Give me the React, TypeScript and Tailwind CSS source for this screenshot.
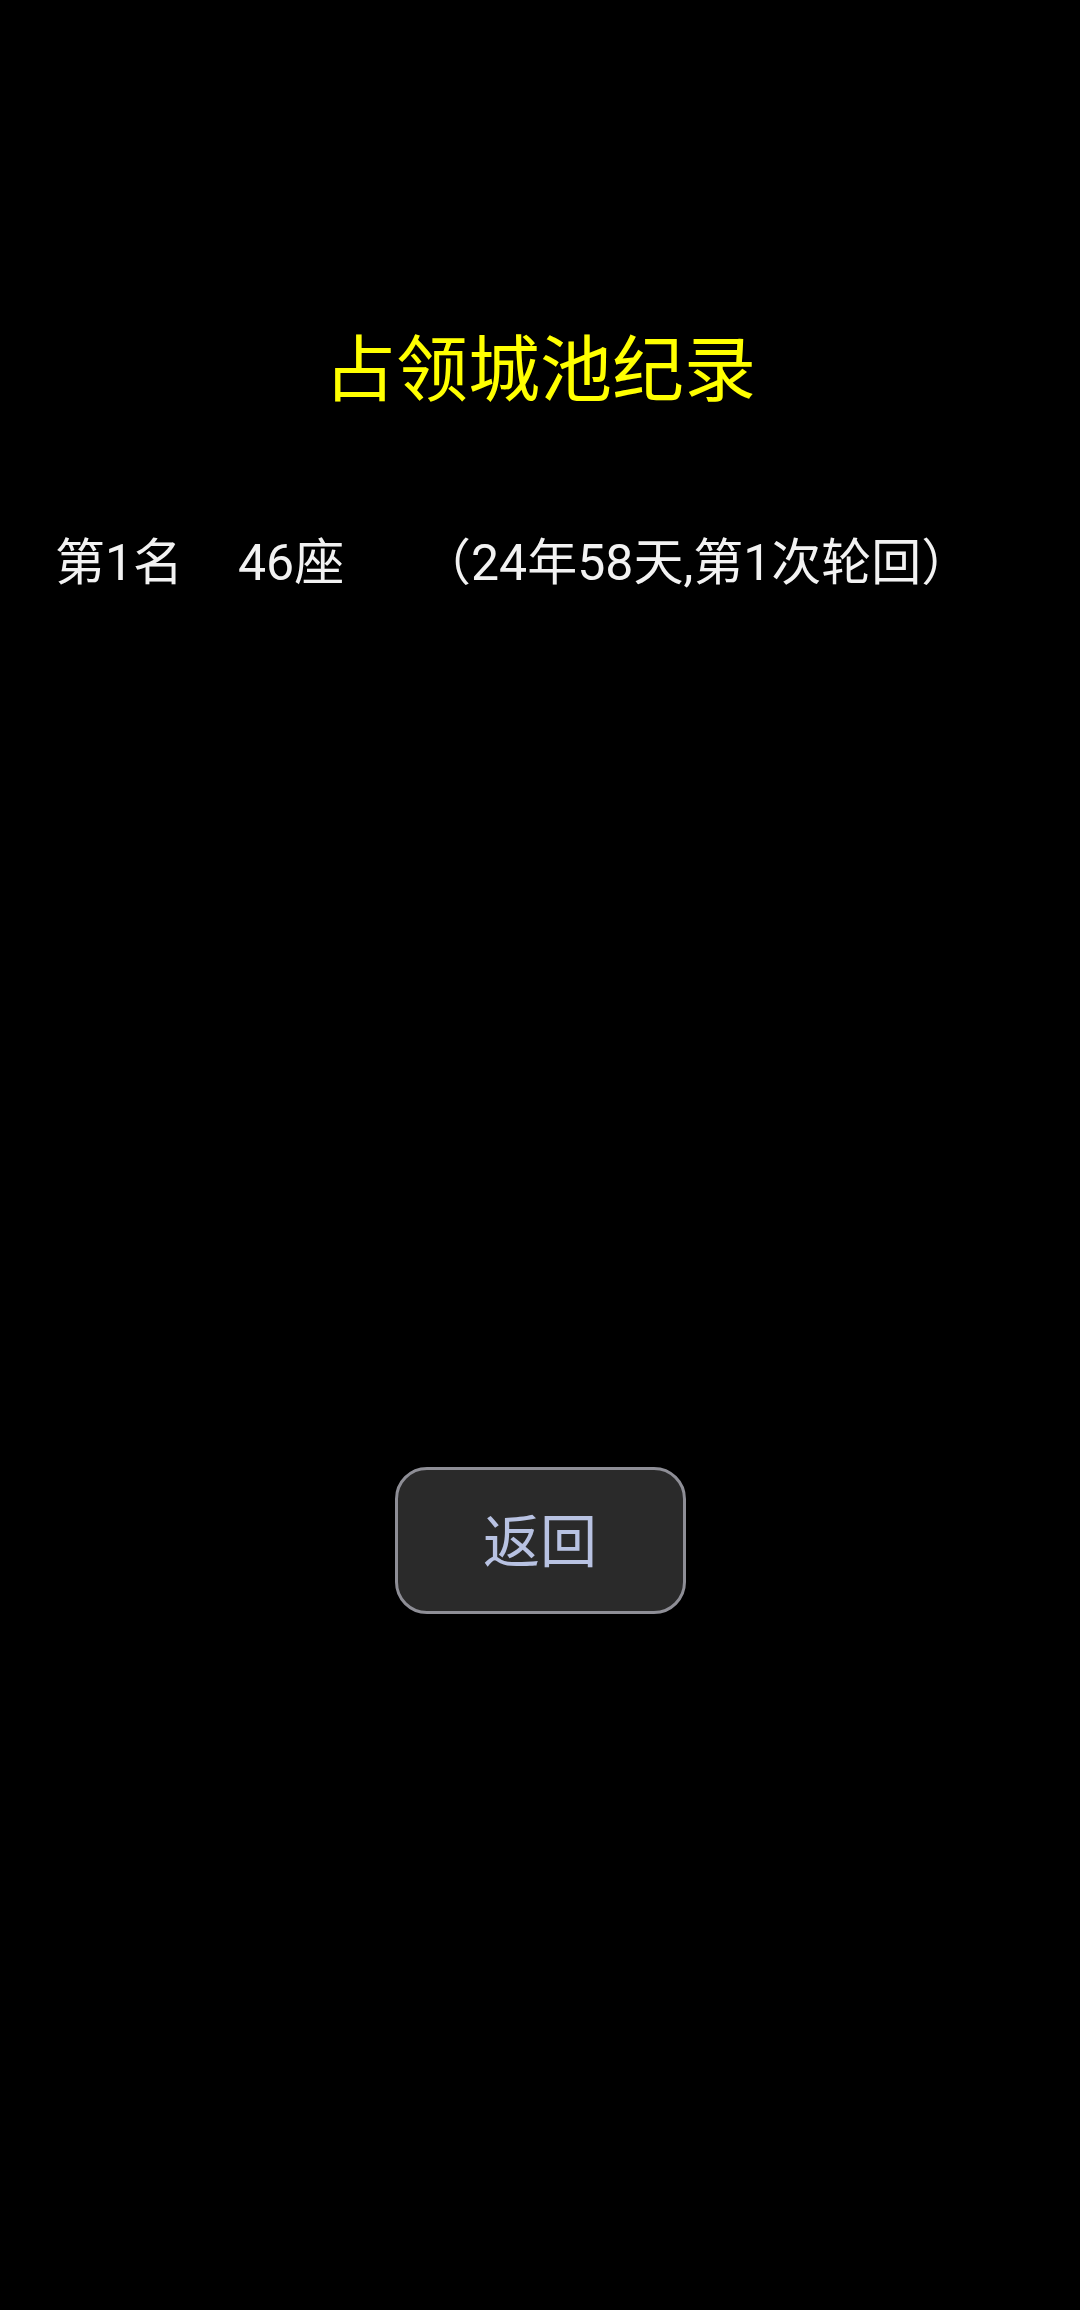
import React from "react";

export default function App() {
  const font = { fontFamily: 'Roboto, "Noto Sans CJK SC", sans-serif' };
  return (
    <div
      className="w-[1080px] h-[2310px] bg-black flex flex-col text-white"
      style={font}
    >
      <div className="mt-[321px] h-[100px] flex items-center justify-center text-[72px] leading-none text-[#ffff00]">
        占领城池纪录
      </div>
      <div className="mt-[112px] h-[60px] flex items-center text-[50px] leading-none text-[#f2f2f2] pl-[55px]">
        <span className="w-[183px]">第1名</span>
        <span className="w-[183px]">46座</span>
        <span>（24年58天,第1次轮回）</span>
      </div>
      <div className="mt-[874px] flex justify-center">
        <button className="w-[291px] h-[147px] rounded-[32px] border-[3px] border-[#8e8e96] bg-[#2a2a2a] flex items-center justify-center text-[57px] leading-none text-[#b8c2e2] pt-[3px]">
          返回
        </button>
      </div>
    </div>
  );
}
